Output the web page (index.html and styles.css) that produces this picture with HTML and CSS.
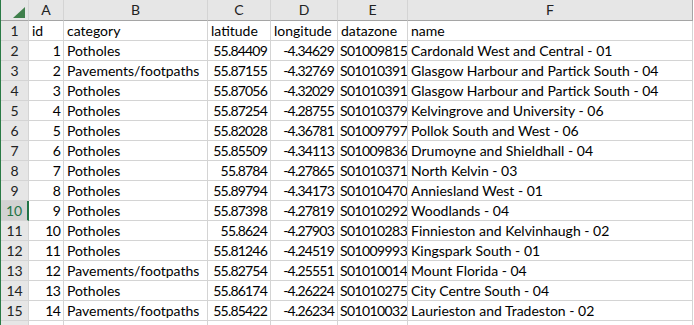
FILE: index.html
```html
<!DOCTYPE html>
<html lang="en">
<head>
    <meta charset="UTF-8">
    <title>Sheet1</title>
    <link rel="stylesheet" href="styles.css">
</head>
<body>

<div class="sheet">
    <!-- Column headers -->
    <div class="corner">
        <svg width="12" height="11" viewBox="0 0 12 11"><polygon points="12,0 12,11 0,11" fill="#3f7f4b"/></svg>
    </div>
    <div class="col-head">A</div>
    <div class="col-head">B</div>
    <div class="col-head">C</div>
    <div class="col-head">D</div>
    <div class="col-head">E</div>
    <div class="col-head">F</div>

    <div class="row-head">1</div>
    <div class="cell">id</div>
    <div class="cell">category</div>
    <div class="cell">latitude</div>
    <div class="cell">longitude</div>
    <div class="cell">datazone</div>
    <div class="cell">name</div>

    <div class="row-head">2</div>
    <div class="cell num">1</div>
    <div class="cell">Potholes</div>
    <div class="cell num">55.84409</div>
    <div class="cell num">-4.34629</div>
    <div class="cell code">S01009815</div>
    <div class="cell">Cardonald West and Central - 01</div>

    <div class="row-head">3</div>
    <div class="cell num">2</div>
    <div class="cell">Pavements/footpaths</div>
    <div class="cell num">55.87155</div>
    <div class="cell num">-4.32769</div>
    <div class="cell code">S01010391</div>
    <div class="cell">Glasgow Harbour and Partick South - 04</div>

    <div class="row-head">4</div>
    <div class="cell num">3</div>
    <div class="cell">Potholes</div>
    <div class="cell num">55.87056</div>
    <div class="cell num">-4.32029</div>
    <div class="cell code">S01010391</div>
    <div class="cell">Glasgow Harbour and Partick South - 04</div>

    <div class="row-head">5</div>
    <div class="cell num">4</div>
    <div class="cell">Potholes</div>
    <div class="cell num">55.87254</div>
    <div class="cell num">-4.28755</div>
    <div class="cell code">S01010379</div>
    <div class="cell">Kelvingrove and University - 06</div>

    <div class="row-head">6</div>
    <div class="cell num">5</div>
    <div class="cell">Potholes</div>
    <div class="cell num">55.82028</div>
    <div class="cell num">-4.36781</div>
    <div class="cell code">S01009797</div>
    <div class="cell">Pollok South and West - 06</div>

    <div class="row-head">7</div>
    <div class="cell num">6</div>
    <div class="cell">Potholes</div>
    <div class="cell num">55.85509</div>
    <div class="cell num">-4.34113</div>
    <div class="cell code">S01009836</div>
    <div class="cell">Drumoyne and Shieldhall - 04</div>

    <div class="row-head">8</div>
    <div class="cell num">7</div>
    <div class="cell">Potholes</div>
    <div class="cell num">55.8784</div>
    <div class="cell num">-4.27865</div>
    <div class="cell code">S01010371</div>
    <div class="cell">North Kelvin - 03</div>

    <div class="row-head">9</div>
    <div class="cell num">8</div>
    <div class="cell">Potholes</div>
    <div class="cell num">55.89794</div>
    <div class="cell num">-4.34173</div>
    <div class="cell code">S01010470</div>
    <div class="cell">Anniesland West - 01</div>

    <div class="row-head selected">10</div>
    <div class="cell num">9</div>
    <div class="cell">Potholes</div>
    <div class="cell num">55.87398</div>
    <div class="cell num">-4.27819</div>
    <div class="cell code">S01010292</div>
    <div class="cell">Woodlands - 04</div>

    <div class="row-head">11</div>
    <div class="cell num">10</div>
    <div class="cell">Potholes</div>
    <div class="cell num">55.8624</div>
    <div class="cell num">-4.27903</div>
    <div class="cell code">S01010283</div>
    <div class="cell">Finnieston and Kelvinhaugh - 02</div>

    <div class="row-head">12</div>
    <div class="cell num">11</div>
    <div class="cell">Potholes</div>
    <div class="cell num">55.81246</div>
    <div class="cell num">-4.24519</div>
    <div class="cell code">S01009993</div>
    <div class="cell">Kingspark South - 01</div>

    <div class="row-head">13</div>
    <div class="cell num">12</div>
    <div class="cell">Pavements/footpaths</div>
    <div class="cell num">55.82754</div>
    <div class="cell num">-4.25551</div>
    <div class="cell code">S01010014</div>
    <div class="cell">Mount Florida - 04</div>

    <div class="row-head">14</div>
    <div class="cell num">13</div>
    <div class="cell">Potholes</div>
    <div class="cell num">55.86174</div>
    <div class="cell num">-4.26224</div>
    <div class="cell code">S01010275</div>
    <div class="cell">City Centre South - 04</div>

    <div class="row-head">15</div>
    <div class="cell num">14</div>
    <div class="cell">Pavements/footpaths</div>
    <div class="cell num">55.85422</div>
    <div class="cell num">-4.26234</div>
    <div class="cell code">S01010032</div>
    <div class="cell">Laurieston and Tradeston - 02</div>

    <!-- next row, only its top shows -->
    <div class="row-head"></div>
    <div class="cell"></div>
    <div class="cell"></div>
    <div class="cell"></div>
    <div class="cell"></div>
    <div class="cell"></div>
    <div class="cell"></div>
</div>

</body>
</html>
```

FILE: styles.css
```css
/* Basic Reset */
* {
    box-sizing: border-box;
    margin: 0;
    padding: 0;
}

body {
    background: #fff;
    overflow: hidden;
    font-family: Lato, "Open Sans", sans-serif;
    font-size: 14px;
    color: #000;
}

/* Grid of cells */
.sheet {
    display: grid;
    grid-template-columns: 28px 35px 144px 63px 67px 70px 285px;
    grid-template-rows: 21px;
    grid-auto-rows: 20px;
    border-left: 1px solid #2a7a45;
    width: 693px;
}

.sheet > div {
    border-right: 1px solid #d4d4d4;
    border-bottom: 1px solid #d4d4d4;
    white-space: nowrap;
    overflow: hidden;
    line-height: 19px;
}

/* Column & Row Headers */
.corner,
.col-head {
    background: #e6e6e6;
    border-bottom-color: #a5a5a5 !important;
}

.corner {
    display: flex;
    justify-content: flex-end;
    align-items: flex-end;
    padding: 0 3px 2px 0;
}

.col-head {
    text-align: center;
    color: #222;
    line-height: 20px;
}

.sheet > .col-head:nth-child(7) {
    border-right-color: #a5a5a5;
}

.row-head {
    background: #e6e6e6;
    text-align: center;
    color: #222;
}

.row-head.selected {
    background: #d2d2d2;
    color: #217346;
    border-right: 2px solid #217346 !important;
}

.cell {
    padding: 0 2px 0 3px;
}

/* Excel digits are narrower than Lato's */
.num {
    text-align: right;
    padding-right: 3px;
    letter-spacing: -0.8px;
}

.code {
    padding-left: 2px;
    letter-spacing: -0.6px;
}
```
